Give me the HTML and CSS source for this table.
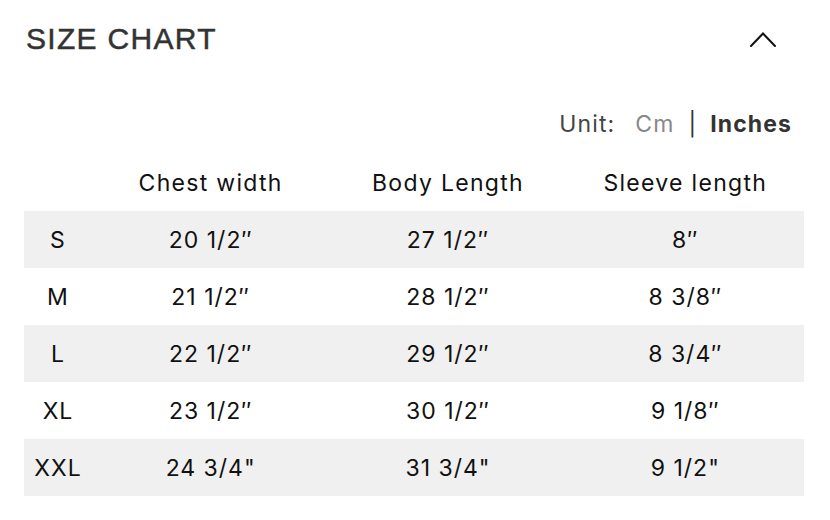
FILE: index.html
```html
<!DOCTYPE html>
<html lang="en">
<head>
<meta charset="utf-8">
<title>Size Chart</title>
<link rel="stylesheet" href="styles.css">
</head>
<body>
<section class="chart">
  <header class="chart-head">
    <h2 class="title">SIZE CHART</h2>
    <button class="toggle" aria-label="Collapse">
      <svg width="28" height="17" viewBox="0 0 28 17" fill="none" stroke="#111" stroke-width="2" stroke-linecap="round" stroke-linejoin="miter"><path d="M2 15 L14 2.5 L26 15"/></svg>
    </button>
  </header>
  <div class="units">
    <span class="unit-label">Unit:</span>
    <span class="unit-off">Cm</span>
    <span class="sep">|</span>
    <span class="unit-on">Inches</span>
  </div>
  <div class="table">
    <div class="row head">
      <div class="cell"></div>
      <div class="cell">Chest width</div>
      <div class="cell">Body Length</div>
      <div class="cell">Sleeve length</div>
    </div>
    <div class="row shade">
      <div class="cell">S</div><div class="cell">20 1/2″</div><div class="cell">27 1/2″</div><div class="cell">8″</div>
    </div>
    <div class="row">
      <div class="cell">M</div><div class="cell">21 1/2″</div><div class="cell">28 1/2″</div><div class="cell">8 3/8″</div>
    </div>
    <div class="row shade">
      <div class="cell">L</div><div class="cell">22 1/2″</div><div class="cell">29 1/2″</div><div class="cell">8 3/4″</div>
    </div>
    <div class="row">
      <div class="cell">XL</div><div class="cell">23 1/2″</div><div class="cell">30 1/2″</div><div class="cell">9 1/8″</div>
    </div>
    <div class="row shade">
      <div class="cell">XXL</div><div class="cell">24 3/4"</div><div class="cell">31 3/4"</div><div class="cell">9 1/2"</div>
    </div>
  </div>
</section>
</body>
</html>
```
FILE: styles.css
```css
* { box-sizing: border-box; }
html, body { margin: 0; padding: 0; background: #fff; }
body { font-family: Inter, "Noto Sans", sans-serif; color: #111; }
.chart { padding: 14px 26px 0 24px; }
.chart-head { display: flex; align-items: center; justify-content: space-between; padding-left: 2px; height: 50px; }
.title { margin: 0; font-family: "Liberation Sans", Arial, sans-serif; font-weight: 400; font-size: 30px; color: #333; letter-spacing: 1.3px; -webkit-text-stroke: 0.5px #333; }
.toggle { background: none; border: 0; padding: 0; margin-right: 27px; display: flex; }
.units { display: flex; justify-content: flex-end; align-items: center; margin-top: 45px; padding-right: 12px; font-size: 23px; letter-spacing: 1.1px; color: #444; height: 30px; }
.unit-label { margin-right: 20px; }
.unit-off { color: #888; }
.sep { margin: 0 13px 0 14px; color: #333; }
.unit-on { font-weight: 700; color: #333; }
.table { margin-top: 15px; }
.row { display: grid; grid-template-columns: 68px 1fr 1fr 1fr; height: 57px; align-items: center; font-size: 23px; letter-spacing: 1px; }
.row.head { height: 57px; letter-spacing: 1.3px; }
.row.shade { background: #f0f0f0; }
.cell { text-align: center; }
```
